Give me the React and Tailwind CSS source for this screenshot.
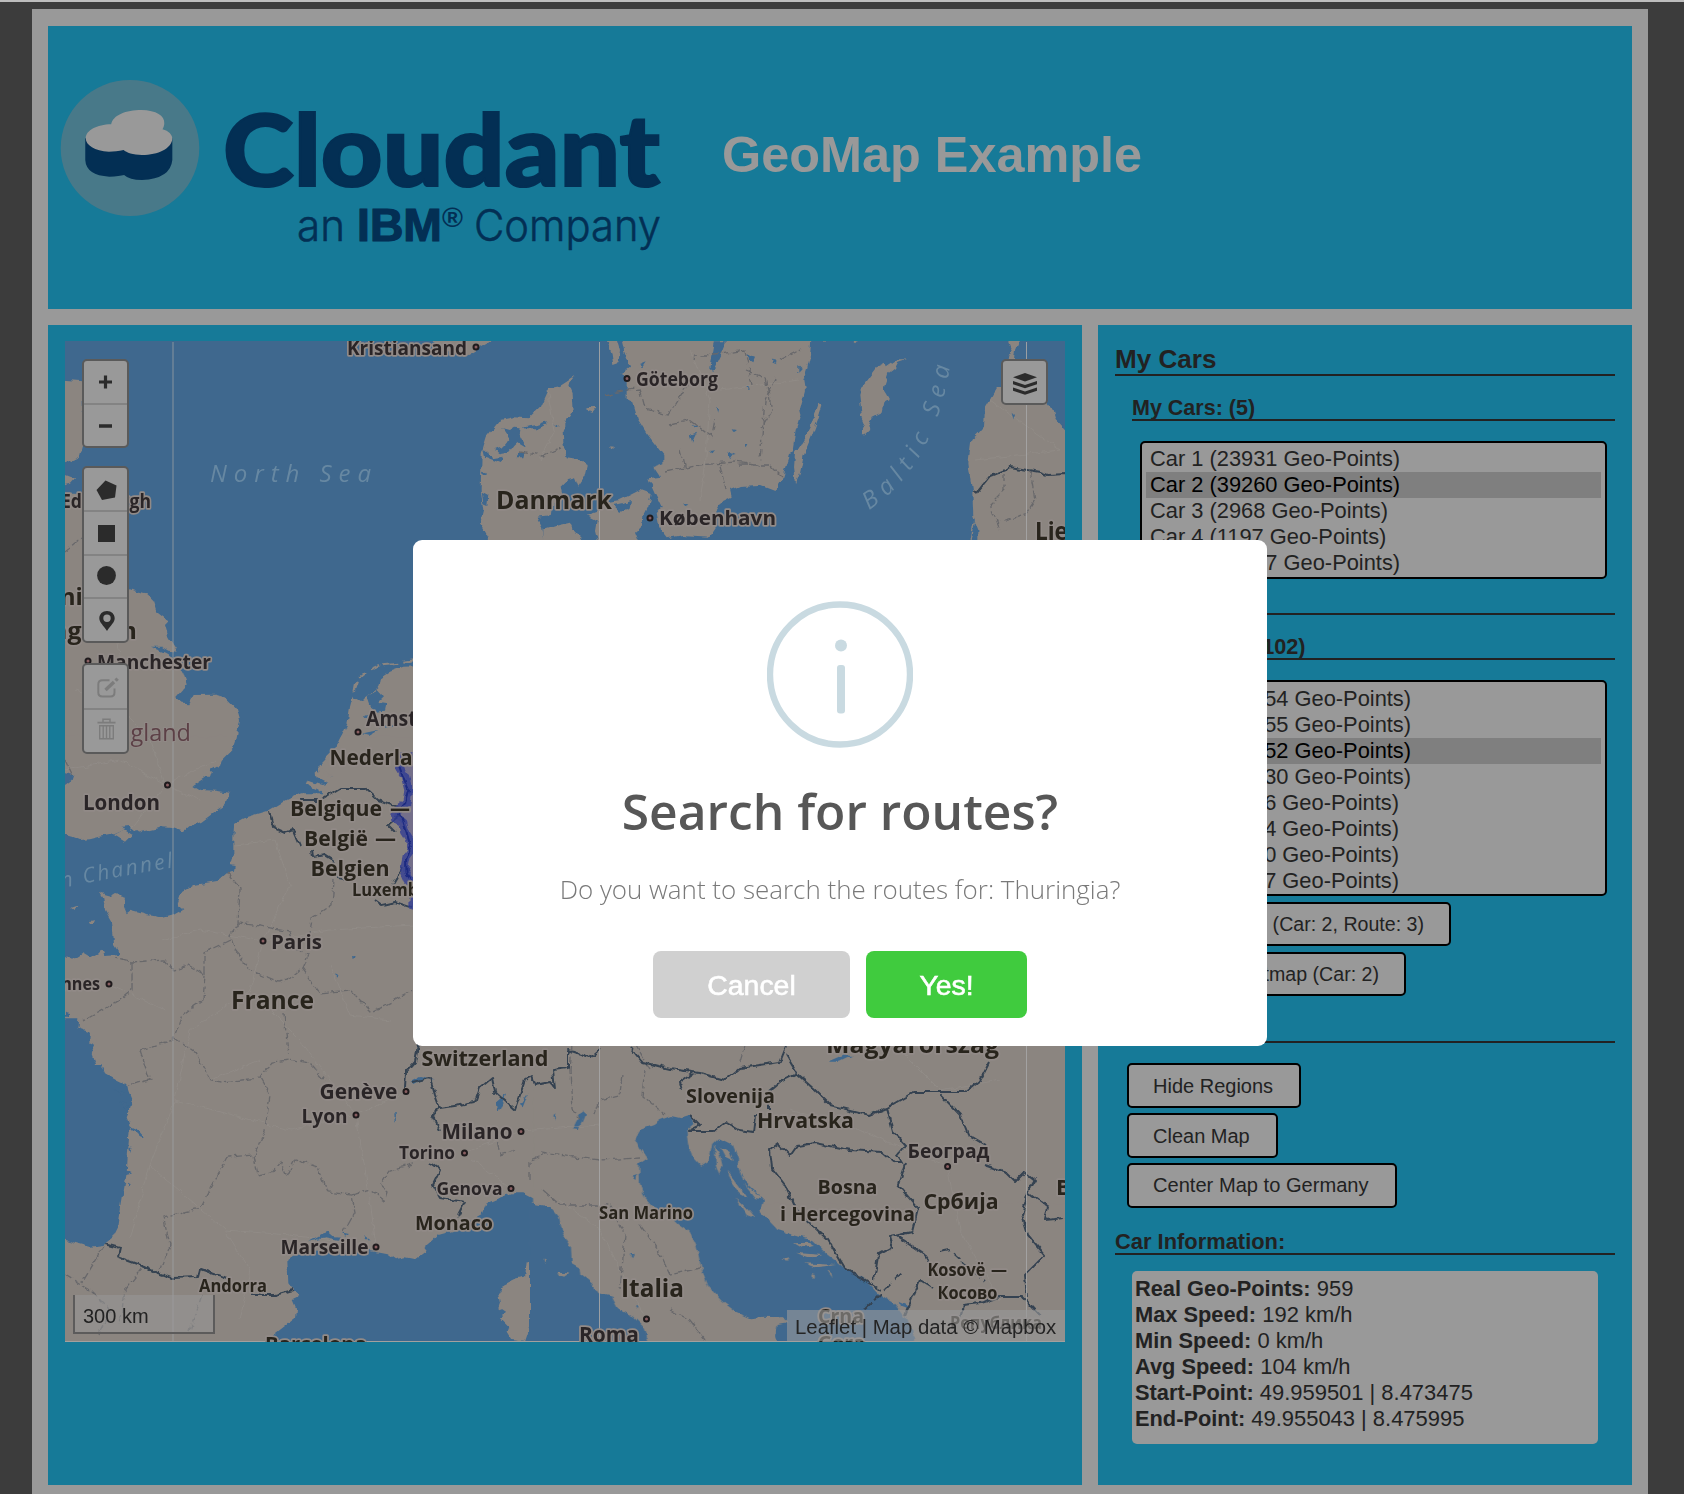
import React from "react";

const LAND = "#8b8580";
const WATER = "#3f688e";

const labels = [
  { t: "Kristiansand", x: 347, y: 354.5, w: 120, s: 19.5, dot: [476, 347] },
  { t: "Göteborg", x: 636, y: 385.5, w: 82, s: 19.5, dot: [627, 378.5] },
  { t: "Danmark", x: 496, y: 509, w: 116, s: 24.5, c: 1 },
  { t: "København", x: 659, y: 525, w: 117, s: 20, dot: [650, 518] },
  { t: "Lietuva", x: 1035, y: 539.5, w: 84, s: 24.5, c: 1 },
  { t: "Edinburgh", x: 61, y: 508, w: 90, s: 19.5 },
  { t: "United", x: 42, y: 605, w: 80, s: 24, c: 1 },
  { t: "Kingdom", x: 27, y: 639, w: 110, s: 24, c: 1 },
  { t: "Manchester", x: 97, y: 669, w: 114, s: 20, dot: [88, 661] },
  { t: "Amsterdam", x: 366, y: 726, w: 114, s: 21, dot: [358, 732] },
  { t: "Nederland", x: 329.5, y: 765, w: 110, s: 22, c: 1 },
  { t: "London", x: 83, y: 810, w: 77, s: 21.5, dot: [167.5, 785] },
  { t: "Belgique", x: 290, y: 816, w: 92, s: 22, c: 1 },
  { t: "—", x: 390, y: 816, w: 20, s: 21, c: 1 },
  { t: "België", x: 304, y: 846, w: 64, s: 22, c: 1 },
  { t: "—", x: 375, y: 846, w: 21, s: 21, c: 1 },
  { t: "Belgien", x: 310.5, y: 875.5, w: 79, s: 22, c: 1 },
  { t: "Luxembourg", x: 352, y: 896, w: 104, s: 17, c: 1 },
  { t: "Paris", x: 271, y: 949, w: 51, s: 20, dot: [263, 941] },
  { t: "Rennes", x: 41, y: 990, w: 59, s: 18.5, dot: [109, 984] },
  { t: "France", x: 231, y: 1009, w: 83, s: 24.5, c: 1 },
  { t: "Switzerland", x: 421.5, y: 1066, w: 127, s: 22, c: 1 },
  { t: "Genève", x: 319.5, y: 1099, w: 78, s: 21, dot: [406, 1091.5] },
  { t: "Lyon", x: 301.5, y: 1123, w: 46, s: 20, dot: [356, 1115] },
  { t: "Milano", x: 441.5, y: 1139, w: 71, s: 21, dot: [521, 1131.5] },
  { t: "Torino", x: 399, y: 1159, w: 56, s: 18.5, dot: [464.5, 1153] },
  { t: "Genova", x: 436.5, y: 1195, w: 66, s: 18.5, dot: [511, 1188.5] },
  { t: "Monaco", x: 415, y: 1230, w: 78, s: 20, c: 1 },
  { t: "Marseille", x: 280.5, y: 1254, w: 88, s: 20, dot: [376, 1247] },
  { t: "Andorra", x: 199, y: 1292, w: 68, s: 17, c: 1 },
  { t: "Barcelona", x: 265, y: 1351, w: 102, s: 20, c: 1 },
  { t: "Slovenija", x: 686, y: 1103, w: 89, s: 19.5, c: 1 },
  { t: "Hrvatska", x: 757, y: 1128, w: 97, s: 21.5, c: 1 },
  { t: "Magyarország", x: 826, y: 1053, w: 173, s: 24, c: 1 },
  { t: "Београд", x: 907.5, y: 1158, w: 82, s: 20, dot: [947.6, 1166.5] },
  { t: "Bosna", x: 817.5, y: 1193.5, w: 60, s: 19.5, c: 1 },
  { t: "i Hercegovina", x: 780, y: 1221, w: 135, s: 19.5, c: 1 },
  { t: "Србија", x: 923.5, y: 1209, w: 75, s: 22, c: 1 },
  { t: "Bulgaria", x: 1056, y: 1195, w: 92, s: 22, c: 1 },
  { t: "San Marino", x: 599, y: 1219, w: 94, s: 17, c: 1 },
  { t: "Kosovë", x: 927.5, y: 1276, w: 58, s: 17.5, c: 1 },
  { t: "—", x: 991, y: 1276, w: 16, s: 17, c: 1 },
  { t: "Косово", x: 937.5, y: 1299, w: 60, s: 17.5, c: 1 },
  { t: "Italia", x: 621, y: 1297, w: 63, s: 25, c: 1, dot: [646.5, 1319] },
  { t: "Roma", x: 579, y: 1342, w: 60, s: 20.5 },
  { t: "Crna", x: 818, y: 1322.5, w: 46, s: 19, c: 1 },
  { t: "Gora", x: 818, y: 1350, w: 47, s: 19, c: 1 },
  { t: "Република", x: 950, y: 1329, w: 92, s: 17, c: 1 },
];

function MapLabel({ item }) {
  return (
    <g>
      <text
        x={item.x}
        y={item.y}
        textLength={item.w}
        lengthAdjust="spacingAndGlyphs"
        fontSize={item.s}
        fontWeight={700}
        fill={item.c ? "#28241c" : "#2a2527"}
        stroke="#918a87"
        strokeWidth="3.5"
        strokeLinejoin="round"
        paintOrder="stroke"
      >
        {item.t}
      </text>
      {item.dot && (
        <circle cx={item.dot[0]} cy={item.dot[1]} r="2.5" fill="#8a5f62" stroke="#1f1b1d" strokeWidth="2" />
      )}
    </g>
  );
}

function EuropeMap() {
  return (
    <svg
      className="block h-[1001px] w-[1000px]"
      viewBox="65 341 1000 1001"
      fontFamily="'Open Sans', 'Noto Sans', sans-serif"
    >
      <defs>
        <filter id="coast" filterUnits="userSpaceOnUse" x="40" y="320" width="1050" height="1050">
          <feTurbulence type="fractalNoise" baseFrequency="0.12" numOctaves="2" seed="4" result="n" />
          <feDisplacementMap in="SourceGraphic" in2="n" scale="6" xChannelSelector="R" yChannelSelector="G" />
        </filter>
        <path id="baltic" d="M869,510 C904,488 941,440 951,358" />
        <path id="channel" d="M62,888 Q120,876 176,867" />
      </defs>
      <rect x="60" y="336" width="1010" height="1010" fill={WATER} />

      <g filter="url(#coast)">
        {/* Great Britain, north */}
        <g transform="translate(50 330) scale(.33333)" fill={LAND}>
          <path d="M20,148 L97,154 L100,345 L90,380 L60,395 L20,410Z" />
          <path d="M20,425 L58,440 L72,445 L60,458 L20,468Z" />
          <path d="M20,490 L97,492 L150,600 L236,775 L262,785 L290,790 L312,812 L322,845 L357,872 L345,885 L355,920 L370,945 L383,965 L355,962 L335,950 L300,950 L345,968 L375,985 L400,1030 L410,1060 L400,1080 L378,1105 L395,1118 L415,1120 L428,1095 L495,1094 L530,1105 L560,1135 L570,1170 L560,1225 L550,1255 L515,1290 L510,1305 L487,1318 L480,1340 L20,1340Z" />
          <path d="M1120,1008 L1060,1010 L1020,1025 L990,1045 L985,1075 L945,1105 L930,1113 L908,1100 L900,1130 L893,1180 L870,1230 L850,1260 L825,1290 L805,1310 L810,1340 L1120,1340Z" />
          <path d="M907,1085 L912,1060 L928,1052 L920,1075Z" />
          <path d="M930,1040 L945,1028 M960,1018 L990,1005 M1000,1003 L1045,998 M1060,995 L1095,990" stroke={LAND} strokeWidth="6" fill="none" />
          <path fill={WATER} d="M950,1100 L985,1082 L1000,1100 L985,1115 L1010,1120 L1005,1142 L980,1145 L960,1130Z M940,1160 L965,1150 L955,1178Z M940,1210 L985,1200 L960,1215Z M990,1195 L1020,1180 L1035,1190Z" />
        </g>
        {/* Great Britain south, France and the Low Countries */}
        <g transform="translate(50 740) scale(.33333)" fill={LAND}>
          <path d="M20,-10 L555,-10 L550,22 L515,55 L508,72 L487,85 L455,97 L478,103 L465,115 L430,138 L450,150 L500,152 L535,158 L527,195 L495,215 L455,245 L415,262 L400,275 L370,265 L335,262 L300,270 L265,278 L240,258 L215,260 L222,270 L195,282 L150,290 L120,298 L90,300 L65,290 L20,278Z" />
          <path d="M192,285 L220,270 L245,285 L225,305Z M65,503 L82,497 L75,510Z M112,543 L135,541 L130,552 L117,552Z" />
          <path d="M872,-10 L855,25 L825,55 L838,72 L805,85 L835,95 L850,110 L800,95 L790,105 L835,130 L815,135 L775,122 L762,130 L800,148 L820,160 L750,160 L700,185 L655,212 L580,235 L553,250 L550,290 L550,340 L540,375 L557,378 L555,395 L530,400 L505,422 L430,435 L390,460 L380,490 L400,508 L370,525 L340,533 L290,525 L240,512 L230,520 L222,500 L225,470 L195,462 L185,468 L150,458 L160,475 L165,510 L185,545 L190,580 L192,615 L210,642 L160,645 L155,632 L120,650 L100,638 L65,660 L20,640 L20,835 L85,835 L82,865 L120,878 L118,905 L140,915 L125,945 L135,975 L1400,975 L1400,-10Z" />
          <path fill={WATER} d="M903,648 L917,650 L915,657 L905,657Z M859,700 L867,704 L861,710Z M45,100 L70,105 L65,120 L45,135Z M45,818 L60,822 L60,830 L45,830Z" />
        </g>
        {/* Western France and Spain */}
        <g transform="translate(50 1030) scale(.33333)" fill={LAND}>
          <path d="M120,0 L142,35 L127,72 L150,95 L165,130 L200,150 L232,165 L235,185 L245,210 L240,240 L230,262 L240,290 L235,350 L230,430 L215,520 L205,590 L190,620 L160,645 L120,650 L80,640 L20,622 L20,980 L640,980 L670,915 L735,865 L738,840 L725,810 L745,800 L730,780 L715,760 L712,690 L735,672 L790,665 L960,660 L1010,670 L1035,688 L1065,682 L1095,688 L1125,665 L1130,645 L1165,615 L1220,600 L1260,575 L1295,555 L1310,520 L1345,505 L1385,490 L1420,490 L1460,510 L1520,540 L1520,0Z" />
          <path d="M1430,697 L1447,700 L1445,745 L1455,780 L1455,840 L1440,890 L1425,935 L1385,930 L1370,905 L1375,890 L1350,865 L1365,848 L1345,835 L1350,820 L1345,795 L1360,765 L1400,745 L1425,740Z" />
          <path fill={WATER} d="M775,635 L815,612 L835,605 L850,618 L868,620 L865,632 L825,625Z M880,608 L897,612 L885,620Z M940,612 L962,628 L945,628Z M190,175 L225,188 L215,192Z M208,210 L230,225 L235,245 L218,228Z M235,285 L262,298 L285,325 L270,322Z M225,420 L250,430 L228,435Z M238,350 L245,350 L241,370Z M234,455 L242,460 L236,470Z M1082,152 L1110,138 L1152,148 L1115,148 L1090,162Z M1033,250 L1038,250 L1037,275 L1034,270Z M1340,215 L1370,190 L1345,250Z M1410,225 L1435,190 L1418,232Z" />
        </g>
        {/* Italy and the Balkans */}
        <g transform="translate(540 1030) scale(.34435 .33333)">
          <rect x="-20" y="0" width="1620" height="524" fill={LAND} />
          <path d="M-10,520 L1620,520 L1620,980 L-10,980Z" fill={LAND} />
          <g fill={WATER}>
            <path d="M-30,520 L0,525 L30,530 L55,560 L65,610 L90,650 L92,700 L118,715 L120,735 L150,760 L170,790 L210,800 L230,840 L270,860 L300,890 L325,980 L-30,980Z" />
            <path d="M380,258 L410,265 L440,255 L448,280 L425,300 L430,345 L445,385 L468,410 L490,395 L500,345 L520,325 L560,345 L575,385 L575,410 L590,450 L650,510 L640,545 L690,600 L735,615 L790,630 L830,670 L885,715 L940,745 L980,790 L1030,820 L1060,860 L1085,900 L1080,980 L700,980 L685,915 L690,885 L715,880 L700,862 L650,860 L610,865 L575,850 L530,815 L490,770 L470,720 L455,650 L435,605 L400,580 L370,550 L330,535 L305,505 L290,460 L288,400 L310,385 L290,355 L275,325 L290,300 L330,285 L350,270Z" />
            <path d="M128,238 L130,255 L112,300 L95,298 L105,275Z M835,95 L880,75 L905,78 L870,95Z M268,440 L282,435 L280,450Z M260,670 L275,675 L270,685Z M278,830 L286,828 L284,838Z M1040,812 L1075,828 L1070,838 L1050,830Z M36,255 L44,250 L42,270Z" />
          </g>
          <g fill={LAND}>
            <path d="M508,345 L522,375 L530,410 L520,435 L510,405Z M525,350 L550,365 L560,390 L540,380Z M545,425 L565,450 L600,500 L580,490 L555,455Z M590,460 L620,485 L648,508 L625,505Z M570,505 L600,535 L625,565 L600,555Z M735,640 L780,638 L795,648 L760,655Z M740,665 L820,672 L790,682Z M770,700 L860,705 L800,712Z M705,688 L722,685 L715,696Z M785,733 L800,735 L792,741Z M50,728 L85,730 L70,740 L55,738Z M10,685 L18,690 L12,695Z M835,722 L850,745 L845,725Z" />
          </g>
        </g>
        {/* Denmark and Sweden */}
        <g transform="translate(400 330) scale(.33333)" fill={LAND}>
          <path d="M80,10 L290,10 L272,36 L240,55 L200,78 L120,62Z" />
          <path d="M527,137 L505,165 L515,190 L518,245 L500,275 L488,300 L490,340 L500,385 L535,390 L563,405 L555,440 L535,470 L525,445 L505,450 L485,470 L490,490 L460,520 L455,555 L410,560 L425,590 L440,660 L285,660 L250,595 L240,580 L250,540 L242,480 L245,370 L260,320 L300,270 L340,262 L385,265 L420,230 L445,175 L480,168 L500,155Z" />
          <path d="M430,600 L480,585 L510,578 L520,600 L543,625 L545,660 L430,660Z M560,555 L590,545 L600,520 L660,510 L680,500 L720,480 L752,492 L745,530 L730,560 L725,590 L708,605 L730,660 L600,660 L585,600 L590,570Z" />
          <path d="M555,238 L575,228 L592,228 L575,248Z M630,352 L643,353 L636,360Z" />
          <path d="M612,10 L645,10 L660,60 L655,100 L640,105 L635,70Z" />
          <path d="M660,10 L672,60 L690,110 L665,130 L680,150 L680,210 L700,220 L715,270 L740,310 L790,375 L790,400 L760,410 L780,440 L745,445 L765,490 L785,530 L770,550 L780,600 L800,625 L850,615 L930,620 L950,590 L945,550 L965,515 L995,500 L990,480 L1020,468 L1080,465 L1125,482 L1150,440 L1170,375 L1180,365 L1190,300 L1202,260 L1198,245 L1215,180 L1210,150 L1220,120 L1230,80 L1235,10Z" />
          <g fill={WATER}>
            <path d="M310,295 L330,300 L345,290 L365,292 L360,320 L375,350 L350,335 L340,345 L325,365 L300,370 L285,360 L310,350 L330,325Z M372,292 L410,285 L435,275 L440,283 L410,298 L380,298Z M250,360 L280,385 L308,380 L305,400 L285,392 L255,380Z M355,370 L375,365 L370,385 L350,385Z M462,280 L480,293 L470,290Z M245,485 L265,495 L262,525 L250,520Z M245,420 L258,435 L248,435Z" />
            <path d="M942,34 L978,34 L962,75 L940,120 L928,110 L935,75Z M720,105 L740,97 L730,112Z M870,315 L888,308 L876,335Z M948,232 L957,235 L953,250Z M925,360 L940,358 L932,370Z M982,362 L1010,375 L990,380Z M995,298 L1008,300 L1000,306Z M875,285 L895,290 L880,295Z M850,520 L865,527 L855,532Z" />
            <path d="M1040,70 L1068,80 L1060,100 L1045,90Z M1115,80 L1130,100 L1118,95Z M1035,345 L1045,345 L1040,355Z M1035,172 L1048,178 L1040,180Z M1195,105 L1205,115 L1195,125Z" />
          </g>
          <path d="M640,525 L665,520 L690,510 L685,540 L660,545Z" fill={WATER} />
        </g>
        {/* Baltic islands and coast */}
        <g transform="translate(740 330) scale(.33333)" fill={LAND}>
          <path d="M237,218 L247,225 L235,265 L215,320 L190,380 L180,430 L168,460 L162,410 L165,370 L190,330 L215,280Z" />
          <path d="M498,88 L475,95 L465,115 L445,130 L430,175 L440,190 L450,208 L430,220 L425,245 L395,260 L385,290 L388,300 L375,313 L362,313 L375,280 L365,255 L358,195 L365,170 L410,110 L435,98 L440,112 L475,88Z" />
          <path d="M1010,300 L975,298 L950,270 L940,240 L920,215 L860,180 L785,170 L770,175 L735,235 L732,290 L715,310 L694,330 L685,400 L697,490 L700,560 L715,600 L715,660 L1010,660Z" />
          <path d="M800,20 L842,20 L825,60 L822,90 L805,90 L815,60Z M245,28 L265,28 L255,36Z M330,25 L362,30 L345,37Z" />
          <path d="M692,640 L703,575" stroke={LAND} strokeWidth="4" />
          <path d="M815,245 L825,255 L820,268Z" fill={WATER} />
        </g>

        {/* Roads */}
        <g fill="none" stroke="#95908b" strokeWidth="1" opacity=".6">
          <path d="M65,770 L120,760 L165,785 L200,800 M165,785 L150,740 L110,700 L75,690 M165,785 L130,830 M165,785 L215,760 M100,720 L120,660 L110,600" />
          <path d="M263,941 L290,885 L275,840 L235,845 M263,941 L330,930 L413,925 M263,941 L250,990 L190,1030 L175,1100 L150,1165 L130,1240 M263,941 L200,930 L160,940 M250,990 L300,1040 L356,1115 L370,1200 L376,1247 L290,1235 L225,1230 L150,1165 M225,1230 L250,1270 L240,1320 M356,1115 L406,1091 M356,1115 L290,1130 L175,1100 M165,1010 L110,984" />
          <path d="M521,1131 L464,1153 L511,1188 M560,1200 L600,1230 L646,1319 M521,1131 L600,1125 M547,390 L555,430 L540,460 M700,500 L705,470 L710,400 L690,350 M800,380 L720,390 M947,1166 L860,1130 L790,1110 M947,1166 L960,1230 L1000,1300 M990,400 L1060,450 M975,460 L1060,450 M1000,1080 L940,1090 L900,1050" />
          <path d="M330,965 L350,1015 L390,1020 M210,1080 L260,1060" />
        </g>
      </g>

      {/* Internal boundaries */}
      <g filter="url(#coast)" fill="none" stroke="#68686b" strokeWidth="1.3" strokeDasharray="8 2.5">
        <path d="M227,872 L240,890 L238,923 L260,926 L290,932 L296,950 L308,955 L302,968 L288,980 L278,982 L250,970 L235,950 L230,935 L238,923" />
        <path d="M334,880 L332,905 L312,918 L310,935 L296,950 M302,968 L320,993 L350,990 L372,1012 L395,1000 L413,990" />
        <path d="M230,940 L205,952 L205,975 L188,965 L173,970 L165,960 L132,962 L115,957 M205,975 L203,1000 L182,1015 L173,1040 L140,1050 M132,962 L132,990 L120,1000 L83,1021" />
        <path d="M173,1037 L195,1052 L210,1080 L222,1082 L260,1078 L272,1062 L288,1060 L310,1064 L325,1080 M284,1012 L288,1055 M260,1078 L270,1095 L265,1130 L254,1155 L228,1157 L210,1190 L200,1208 L163,1217 L170,1245 L160,1270" />
        <path d="M254,1155 L258,1175 L272,1172 L280,1162 L287,1175 L295,1160 L318,1167 L328,1192 L352,1195 L355,1212 L344,1232 M352,1195 L370,1190 L385,1202 L388,1192 L380,1185 L390,1170 L413,1164" />
        <path d="M140,1050 L150,1080 L128,1085 M104,1246 L82,1283 M142,1268 L125,1290 L120,1325 M65,1275 L90,1290 L110,1310 L98,1335 M202,1295 L190,1330" />
        <path d="M572,1045 L570,1070 L572,1110 L580,1118 M622,1075 L620,1095 L600,1100 L595,1115 M645,1070 L642,1095 L665,1115 M540,1153 L600,1160 L640,1158 M543,1190 L560,1205 L610,1205 L625,1235 L620,1290 M640,1225 L658,1250 L670,1275 L700,1268 M670,1310 L690,1320 L705,1340 M515,1150 L500,1155 L496,1135 M530,1180 L530,1160 L550,1152" />
        <path d="M520,452 L542,456 L562,447 M640,389 L645,408 L668,415 L690,380 M694,360 L695,355 L715,355 L745,350 L752,385 M670,425 L690,420 L712,436 L715,420 M680,450 L685,470 M665,472 L700,465 L735,462 L760,466 M720,465 L726,490 M775,378 L765,400 L760,460 M745,370 L765,378 L772,410 L760,430 M740,465 L770,465 L782,477 M780,360 L800,350 M1005,475 L1005,490 L990,505 L1000,530 M1030,470 L1035,500 L1025,515 L1000,522 M605,395 L625,390 L640,389" />
        <path d="M65,760 L72,775 M65,552 L82,538 M635,1043 L650,1070 M745,1045 L740,1062" />
      </g>
      {/* National borders */}
      <g filter="url(#coast)" fill="none" stroke="#354351" strokeWidth="2" strokeLinejoin="round">
        <path d="M270,811 L274,828 L285,833 L293,830 L300,846 M312,850 L313,857 L325,855 L333,860 L330,875 L352,880 M300,800 L320,800 L340,788 L365,788 L378,800 L400,808 M400,815 L388,825 L395,832 M403,866 L392,885 M375,900 L382,905 L395,902 L413,908" />
        <path d="M418,1045 L415,1062 L406,1072 L405,1088 M412,1082 L430,1078 L435,1095 L440,1108 L460,1105 L475,1102 L480,1088 L492,1078 L495,1092 L515,1110 L525,1080 L532,1076 L535,1085 L550,1082 L555,1088 L553,1070 L568,1068 L568,1050 L590,1057 L600,1048" />
        <path d="M440,1108 L432,1115 L440,1130 M430,1163 L440,1170 L433,1185 L440,1198 L465,1202 L458,1216" />
        <path d="M105,1244 L120,1248 L118,1257 L145,1267 L155,1272 L172,1278 L198,1277 L200,1269 L226,1278 M250,1295 L275,1295 L293,1290" />
        <path d="M630,1047 L642,1062 L670,1069 L700,1073 L725,1080 L740,1068 L780,1062 L786,1047 M682,1090 L680,1082 L693,1073 M786,1055 L798,1075 L815,1090 L830,1105 L870,1115 L887,1108 L915,1092 L965,1092 L980,1080 L989,1062 M798,1073 L780,1082 L768,1092 L768,1110 M690,1115 L700,1125 L688,1131 L715,1131 L726,1122 L740,1130 L753,1132 L755,1115" />
        <path d="M887,1108 L893,1132 L905,1145 L897,1155 L902,1163 L895,1163 L882,1152 L850,1150 L815,1143 L797,1146 L790,1156 L778,1144 L770,1150 L772,1168 L785,1185 L796,1210 L828,1240 L845,1268 L872,1285 L880,1290" />
        <path d="M905,1163 L898,1185 L918,1208 L912,1232 L890,1237 L893,1247 L878,1255 L874,1280 M895,1235 L925,1255 L933,1268 M940,1094 L960,1115 L968,1135 L985,1145 M985,1165 L1005,1172 L1015,1182 L1025,1172 L1035,1180 L1028,1192 L1048,1207 L1045,1220 L1065,1218 M1028,1192 L1022,1215 L1028,1235 L1045,1255 L1025,1275 L1027,1297" />
        <path d="M905,1315 L920,1280 L933,1288 M960,1318 L963,1305 L980,1303 L1000,1297 L1023,1297 L1040,1315" />
        <path d="M973,492 L978,491 L990,476 L1005,470 L1010,467 L1040,472 L1048,475 L1065,474 L1075,476" />
        <path d="M864,1310 L903,1272 M940,1252 L950,1250 L985,1282" strokeDasharray="10 4" />
      </g>

      {/* Region outline */}
      <g filter="url(#coast)">
        <g transform="translate(50 740) scale(.33333)" strokeLinejoin="round">
          <path d="M1130,52 L1060,52 L1050,85 L1065,110 L1075,150 L1070,185 L1040,210 L1035,235 L1060,250 L1065,275 L1080,300 L1085,330 L1070,350 L1062,390 L1075,420 L1092,430 L1090,500 L1130,500Z" fill="#2b34a8" fillOpacity=".25" stroke="#2e3894" strokeOpacity=".75" strokeWidth="24" />
          <path d="M1045,75 L1060,115 L1075,150 L1065,190 L1045,215 L1060,240 L1072,285 L1082,320 L1068,360 L1070,400 L1088,430" fill="none" stroke="#1c2b80" strokeWidth="6" />
        </g>
      </g>

      {/* Tile seams */}
      <path d="M173,342 V1342" stroke="#a0a3a5" strokeOpacity=".5" strokeWidth="1.5" />
      <path d="M599.5,342 V1342 M1026.5,342 V1342" stroke="#a5a5a5" strokeOpacity=".9" strokeWidth="1" />
      <path d="M65,1341.5 H1065" stroke="#a3a09e" strokeWidth="1" />

      <g fontStyle="italic" fill="#7c9aae" fillOpacity=".65" fontWeight="400">
        <text x="210" y="482" fontSize="24" textLength="161">North Sea</text>
        <text fontSize="24"><textPath href="#baltic" textLength="170">Baltic Sea</textPath></text>
        <text fontSize="21"><textPath href="#channel" textLength="113">n Channel</textPath></text>
      </g>
      <text x="103" y="741" fontSize="24" textLength="88" lengthAdjust="spacingAndGlyphs" fill="#5c4046" stroke="#908986" strokeWidth="2" paintOrder="stroke">England</text>
      {labels.map((item, i) => (
        <MapLabel key={i} item={item} />
      ))}
    </svg>
  );
}

function ControlGroup({ className, children }) {
  return (
    <div className={`flex w-[47px] flex-col divide-y-2 divide-[#838383] overflow-hidden rounded-[5px] border-2 border-[#5a5a5a] bg-[#999] text-[#2b2b2b] ${className}`}>
      {children}
    </div>
  );
}

function Cell({ children }) {
  return <div className="flex min-h-0 flex-1 items-center justify-center">{children}</div>;
}

function MapControls() {
  return (
    <>
      <div className="absolute left-[17px] top-[18px] flex flex-col">
        <ControlGroup className="h-[89px]">
          <Cell>
            <svg className="mt-px mr-px" width="13" height="14" viewBox="0 0 13 14"><path d="M0,7H13M6.5,.5V13.5" stroke="currentColor" strokeWidth="3.2" /></svg>
          </Cell>
          <Cell>
            <svg className="mt-px mr-px" width="13" height="14" viewBox="0 0 13 14"><path d="M0,7H13" stroke="currentColor" strokeWidth="3.6" /></svg>
          </Cell>
        </ControlGroup>
        <ControlGroup className="mt-[18px] h-[177px]">
          <Cell>
            <svg className="ml-0.5 mt-1" width="21" height="21" viewBox="0 0 21 21"><path d="M9.5,.5 L20.5,5.5 L19,17.5 L6,20 L.5,10Z" fill="currentColor" /></svg>
          </Cell>
          <Cell>
            <svg className="ml-0.5 mt-0.5" width="17" height="17" viewBox="0 0 17 17"><rect width="17" height="17" fill="currentColor" /></svg>
          </Cell>
          <Cell>
            <svg className="ml-0.5 mb-px" width="19" height="19" viewBox="0 0 19 19"><circle cx="9.5" cy="9.5" r="9.4" fill="currentColor" /></svg>
          </Cell>
          <Cell>
            <svg className="ml-0.5 mt-0.5" width="16" height="20" viewBox="0 0 16 20"><path fillRule="evenodd" d="M8,0 C3.5,0 .3,3.2 .3,7.3 C.3,11.5 4.5,14.5 8,20 C11.5,14.5 15.7,11.5 15.7,7.3 C15.7,3.2 12.5,0 8,0Z M8,3.5 A3.7,3.7 0 1 1 8,10.9 A3.7,3.7 0 1 1 8,3.5Z" fill="currentColor" /></svg>
          </Cell>
        </ControlGroup>
        <ControlGroup className="mt-[20px] h-[91px]">
          <Cell>
            <svg className="ml-1 mt-0.5" width="22" height="21" viewBox="0 0 22 21" fill="none" stroke="#7c7c7c"><path d="M12.5,3.3H5.5Q1.3,3.3 1.3,7.5V15.5Q1.3,19.5 5.5,19.5H13.5Q17.5,19.5 17.5,15.5V11.5" strokeWidth="2" /><path d="M8.5,13 L17,5" strokeWidth="3.4" /><path d="M18.6,3.6L20.6,1.6" strokeWidth="3.4" /></svg>
          </Cell>
          <Cell>
            <svg className="ml-0.5 mb-1" width="19" height="22" viewBox="0 0 19 22" fill="none" stroke="#7c7c7c"><path d="M.5,4.7H18.5" strokeWidth="1.7" /><path d="M6,4V1.2H13V4" strokeWidth="1.5" /><path d="M2.7,7.7V20.7H16.3V7.7ZM6.2,8V20.5M9.5,8V20.5M12.8,8V20.5" strokeWidth="1.4" /></svg>
          </Cell>
        </ControlGroup>
      </div>
      <div className="absolute right-[17px] top-[18px] flex h-[46px] w-[47px] items-center justify-center rounded-[5px] border-2 border-[#5a5a5a] bg-[#999]">
        <svg className="mt-1" width="24" height="22" viewBox="0 0 24 22" fill="#2b2b2b"><path d="M12,0 L24,4.2 L12,8.4 L0,4.2Z M0,8 L12,12 L24,8 V11.2 L12,15.2 L0,11.2Z M0,14.6 L12,18.6 L24,14.6 V17.8 L12,21.8 L0,17.8Z" /></svg>
      </div>
      <div className="absolute bottom-[8px] left-[8px] h-[39px] w-[142px] border-2 border-t-0 border-[#5c5b5b] bg-[#999]/50 pl-[8px] text-[20px] leading-[42px] text-[#222]">
        300 km
      </div>
      <div className="absolute bottom-[1px] right-0 h-[31px] w-[278px] whitespace-nowrap bg-[#999]/60 pl-[8px] text-[20.35px] leading-[35px] text-[#242424]">
        Leaflet | Map data © Mapbox
      </div>
    </>
  );
}

function Logo() {
  return (
    <svg className="block h-[283px] w-[640px]" viewBox="48 26 640 283">
      <ellipse cx="130" cy="148" rx="69.3" ry="68" fill="#487989" />
      <g transform="scale(.44643 .33333)">
        <path d="M191,415 L191,480 Q193,526 245,530 Q268,529 278,525 Q290,540 318,540 Q382,536 386,480 L386,415Z" fill="#032f54" />
        <path d="M249,373 C253,345 282,330 317,330 C350,331 369,347 368,370 C368,378 366,383 364,388 C378,393 386,404 386,417 C384,445 355,465 318,465 C298,464 283,458 277,450 C265,454 255,455 244,455 C212,453 192,436 192,414 C193,391 217,374 249,373Z" fill="#999" />
      </g>
      <g fill="#032f54">
        <text x="223" y="186" fontSize="100" fontWeight="900" fontFamily="Lato, sans-serif" stroke="#032f54" strokeWidth="2.2" textLength="437" lengthAdjust="spacingAndGlyphs">Cloudant</text>
        <g fontFamily="'Liberation Sans', Arial, sans-serif">
          <text x="297" y="241" fontSize="44" fontWeight="300" fontFamily="Inter, sans-serif" stroke="#032f54" strokeWidth=".5" textLength="48" lengthAdjust="spacingAndGlyphs">an</text>
          <text x="357" y="241" fontSize="46" fontWeight="700" stroke="#032f54" strokeWidth="1.2" textLength="85" lengthAdjust="spacingAndGlyphs">IBM</text>
          <text x="442" y="227" fontSize="27" fontWeight="700" textLength="21" lengthAdjust="spacingAndGlyphs">®</text>
          <text x="474" y="241" fontSize="44" fontWeight="300" fontFamily="Inter, sans-serif" stroke="#032f54" strokeWidth=".5" textLength="187" lengthAdjust="spacingAndGlyphs">Company</text>
        </g>
      </g>
    </svg>
  );
}

function Options({ items, selected, className }) {
  return (
    <div className={`ml-[25px] w-[467px] overflow-hidden rounded-[5px] border-2 border-black bg-[#999] px-1 text-[21.85px] ${className}`}>
      {items.map((text, i) => (
        <div
          key={text}
          className={`h-[26px] whitespace-nowrap pl-1 leading-[26px] ${i === selected ? "bg-[#7f7f7f] text-black" : "text-[#222]"}`}
        >
          {text}
        </div>
      ))}
    </div>
  );
}

function PanelButton({ className, children }) {
  return (
    <button className={`ml-[12px] flex shrink-0 items-center whitespace-nowrap rounded-[5px] border-2 border-black bg-[#999] text-[#222] ${className}`}>
      {children}
    </button>
  );
}

const cars = [
  "Car 1 (23931 Geo-Points)",
  "Car 2 (39260 Geo-Points)",
  "Car 3 (2968 Geo-Points)",
  "Car 4 (1197 Geo-Points)",
  "Car 5 (10577 Geo-Points)",
];
const routes = [
  "Route 1 (1054 Geo-Points)",
  "Route 2 (1055 Geo-Points)",
  "Route 3 (1052 Geo-Points)",
  "Route 4 (1030 Geo-Points)",
  "Route 5 (306 Geo-Points)",
  "Route 6 (214 Geo-Points)",
  "Route 7 (190 Geo-Points)",
  "Route 8 (327 Geo-Points)",
];
const info = [
  ["Real Geo-Points:", "959"],
  ["Max Speed:", "192 km/h"],
  ["Min Speed:", "0 km/h"],
  ["Avg Speed:", "104 km/h"],
  ["Start-Point:", "49.959501 | 8.473475"],
  ["End-Point:", "49.955043 | 8.475995"],
];

function Sidebar() {
  return (
    <aside className="flex h-[1160px] w-[534px] flex-col bg-[#167a98] pl-[17px] pr-[17px] text-[#222]">
      <h2 className="mt-[17px] h-[34px] border-b-2 border-[#222] text-[26.1px] font-bold leading-[35px]">My Cars</h2>
      <h3 className="ml-[17px] mt-[19px] h-[26px] border-b-2 border-[#222] text-[21.5px] font-bold leading-[26px]">My Cars: (5)</h3>
      <Options items={cars} selected={1} className="mt-[20px] h-[138px] pt-[3px]" />
      <h2 className="mt-[2px] h-[34px] border-b-2 border-[#222] text-[26px] font-bold leading-[35px]">Routes</h2>
      <h3 className="ml-[17px] mt-[19px] h-[26px] border-b-2 border-[#222] text-[21.7px] font-bold leading-[26px]">My Routes: (102)</h3>
      <Options items={routes} selected={2} className="mt-[20px] h-[216px] pt-[4px]" />
      <PanelButton className="mt-[6px] h-[44px] w-[324px] justify-end pr-[25px] pt-[2px] text-[19.6px]">Show Route (Car: 2, Route: 3)</PanelButton>
      <PanelButton className="mt-[6px] h-[44px] w-[279px] justify-end pr-[25px] pt-[2px] text-[19.6px]">Display Heatmap (Car: 2)</PanelButton>
      <h2 className="mt-[13px] h-[34px] border-b-2 border-[#222] text-[26px] font-bold leading-[33px]">Map</h2>
      <PanelButton className="mt-[20px] h-[45px] w-[174px] pl-[24px] text-[20px]">Hide Regions</PanelButton>
      <PanelButton className="mt-[5px] h-[45px] w-[151px] pl-[24px] text-[20px]">Clean Map</PanelButton>
      <PanelButton className="mt-[5px] h-[45px] w-[270px] pl-[24px] text-[20.1px]">Center Map to Germany</PanelButton>
      <h3 className="mt-[21px] h-[26px] border-b-2 border-[#222] text-[21.9px] font-bold leading-[26px]">Car Information:</h3>
      <div className="ml-[17px] mt-[16px] h-[173px] w-[466px] rounded-[5px] bg-[#999] pl-[3px] pt-[5px] text-[21.95px] leading-[26px]">
        {info.map(([k, v]) => (
          <p key={k} className="h-[26px] whitespace-nowrap">
            <b className="text-[21.8px] font-bold">{k}</b> {v}
          </p>
        ))}
      </div>
    </aside>
  );
}

function Modal() {
  return (
    <div className="absolute left-[413px] top-[538px] flex h-[506px] w-[854px] flex-col items-center rounded-[9px] bg-white">
      <svg className="mt-[61px] h-[147px] w-[146px]" viewBox="0 0 146 147">
        <circle cx="73" cy="73.5" r="70" fill="none" stroke="#c9dae1" strokeWidth="6.4" />
        <circle cx="74" cy="44.5" r="6" fill="#c9dae1" />
        <rect x="70" y="64" width="8" height="48.5" rx="3" fill="#c9dae1" />
      </svg>
      <h1 className="mt-[31px] whitespace-nowrap font-['Open_Sans'] text-[49.7px] font-semibold leading-[64px] text-[#575757]">Search for routes?</h1>
      <p className="mt-[28px] whitespace-nowrap font-['Open_Sans'] text-[25.95px] font-light leading-[36px] text-[#797979]">
        Do you want to search the routes for: Thuringia?
      </p>
      <div className="mt-[44px] flex gap-4 text-[28.4px] font-medium text-white">
        <button className="h-[67px] w-[197px] rounded-[8px] bg-[#d0d0d0] pt-[2px] [-webkit-text-stroke:0.6px_white]">Cancel</button>
        <button className="h-[67px] w-[161px] rounded-[8px] bg-[#40cb3e] pt-[2px] [-webkit-text-stroke:0.6px_white]">Yes!</button>
      </div>
    </div>
  );
}

export default function App() {
  return (
    <div className="relative h-[1494px] w-[1684px] overflow-hidden border-t-2 border-[#bdbdbd] bg-[#3c3c3c] font-['Liberation_Sans',Arial,sans-serif]">
      <main className="ml-[32px] mt-[7px] flex h-[1500px] w-[1616px] flex-col gap-4 bg-[#999] px-4 pt-[17px]">
        <header className="flex h-[283px] shrink-0 bg-[#167a98]">
          <Logo />
          <h1 className="ml-[34px] mt-[97px] whitespace-nowrap text-[50.4px] font-bold leading-[64px] text-[#999]">GeoMap Example</h1>
        </header>
        <div className="flex shrink-0 gap-4">
          <section className="h-[1160px] w-[1034px] bg-[#167a98] px-[17px] pt-[16px]">
            <div className="relative h-[1001px] w-[1000px] overflow-hidden">
              <EuropeMap />
              <MapControls />
            </div>
          </section>
          <Sidebar />
        </div>
      </main>
      <Modal />
    </div>
  );
}
